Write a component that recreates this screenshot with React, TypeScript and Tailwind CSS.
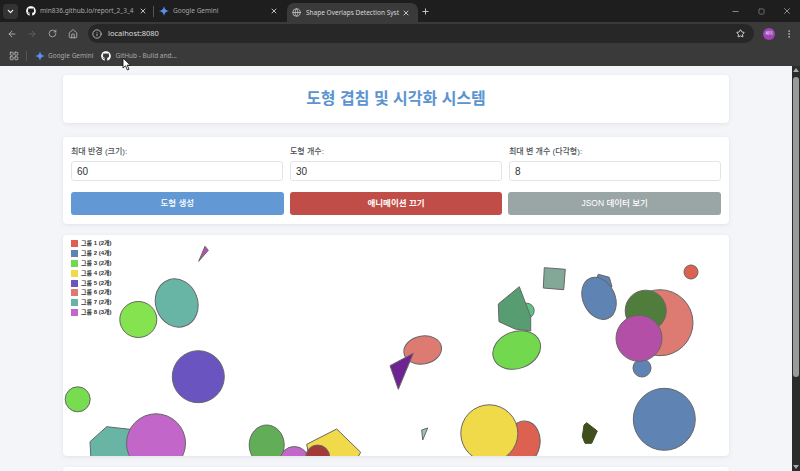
import { ArrowLeft, ArrowRight, EllipsisVertical, Globe, House, Info, LayoutGrid, Minus, Plus, RotateCw, Star, X, ChevronDown, Square } from 'lucide-react';
import { FaGithub } from 'react-icons/fa';

const legend = [
  { label: '그룹 1 (2개)', color: 'bg-[#dd6150]' },
  { label: '그룹 2 (4개)', color: 'bg-[#5f84b3]' },
  { label: '그룹 3 (2개)', color: 'bg-[#72d94f]' },
  { label: '그룹 4 (2개)', color: 'bg-[#f0da4a]' },
  { label: '그룹 5 (2개)', color: 'bg-[#6a55c0]' },
  { label: '그룹 6 (2개)', color: 'bg-[#dd7a72]' },
  { label: '그룹 7 (2개)', color: 'bg-[#68b5a5]' },
  { label: '그룹 8 (3개)', color: 'bg-[#c266c9]' },
];

const Sparkle = ({ size = 10 }: { size?: number }) => (
  <svg width={size} height={size} viewBox="0 0 24 24" className="shrink-0">
    <path d="M12 0C12.8 7 17 11.2 24 12C17 12.8 12.8 17 12 24C11.2 17 7 12.8 0 12C7 11.2 11.2 7 12 0Z" fill="#5b8def" />
  </svg>
);

const Field = ({ label, value }: { label: string; value: string }) => (
  <div className="flex w-[212px] flex-col">
    <label className="h-[24px] text-[8px] leading-[29px] font-medium text-[#4a4f55]">{label}</label>
    <div className="flex h-[20px] items-center rounded-[3px] border border-[#e2e4e8] bg-white pl-[5px] text-[10px] text-[#333]">{value}</div>
  </div>
);

const Shapes = () => (
  <svg viewBox="63 235 666 221" className="h-full w-full" stroke="#666" strokeWidth="1">
    <polygon points="205,246.3 208.3,250.3 198.7,261.3" fill="#b44fb8" />
    <ellipse cx="176.7" cy="303" rx="21" ry="24.5" transform="rotate(-20 176.7 303)" fill="#68b5a5" />
    <ellipse cx="138.3" cy="319.5" rx="18.5" ry="18" fill="#85e34f" />
    <circle cx="198.3" cy="376.7" r="26" fill="#6a55c0" />
    <circle cx="77.7" cy="399.3" r="12.5" fill="#78dc50" />
    <polygon points="91,460 90,441.7 106.7,426.7 130,429.3 150,460" fill="#68b5a5" />
    <circle cx="156" cy="443.3" r="29.5" fill="#c266c9" />
    <ellipse cx="266.7" cy="445" rx="17.5" ry="20" fill="#62ad58" />
    <polygon points="306.7,444.3 336.7,429 360.7,452.3 355,462 310,462" fill="#f0da4a" />
    <circle cx="294.3" cy="461" r="14.5" fill="#c266c9" />
    <circle cx="317.7" cy="457" r="12" fill="#a33a3a" />
    <polygon points="427.7,428 421.7,430 422.7,440" fill="#8fc9b8" />
    <ellipse cx="422.7" cy="350" rx="19" ry="14" transform="rotate(-10 422.7 350)" fill="#dd7a72" />
    <polygon points="413.3,353.3 390,365.7 398.3,389.3" fill="#6f2392" />
    <ellipse cx="523" cy="443" rx="17" ry="22" transform="rotate(10 523 443)" fill="#dd6150" />
    <circle cx="489.3" cy="433.3" r="28.5" fill="#f0da4a" />
    <polygon points="544.3,267.7 565.3,269.3 563.7,289.7 543.3,288" fill="#84a898" />
    <circle cx="526.7" cy="310.7" r="7.5" fill="#5fc284" />
    <polygon points="519.3,286.7 498.3,304 499,321.7 515,329 530.7,331 530.7,316.7" fill="#589c72" />
    <ellipse cx="516.7" cy="350" rx="24.5" ry="18.5" transform="rotate(-20 516.7 350)" fill="#72d94f" />
    <polygon points="598.3,274.3 609.3,277.3 612,286.7 600,290 596.7,278" fill="#5f84b3" />
    <ellipse cx="599" cy="298.3" rx="16" ry="22" transform="rotate(-25 599 298.3)" fill="#5f84b3" />
    <circle cx="691" cy="272" r="7" fill="#dd6150" />
    <circle cx="660" cy="322.7" r="33" fill="#dd7a72" />
    <circle cx="645.7" cy="310.7" r="20.5" fill="#507d3c" />
    <circle cx="642" cy="368" r="9" fill="#5f84b3" />
    <circle cx="639" cy="338.3" r="23" fill="#b44fa8" />
    <circle cx="664.3" cy="419.3" r="31" fill="#5f84b3" />
    <polygon points="586.7,422.7 597.3,431 591.7,443.3 585,443.3 582.3,436.7 584,425" fill="#3f4f1e" stroke="#3f4f1e" />
  </svg>
);

const App = () => (
  <div className="relative flex h-[471px] w-[800px] flex-col overflow-hidden bg-[#f4f5f8] font-['Liberation_Sans','Noto_Sans_CJK_KR',sans-serif]">
    {/* browser chrome */}
    <div className="h-[66px] shrink-0 bg-[#3a3a3a] font-['Noto_Sans','Noto_Sans_CJK_KR',sans-serif] text-[#c4c4c4]">
      <div className="flex h-[22px] items-center bg-[#1e1e1e] text-[6.5px]">
        <div className="ml-[3px] flex h-[15px] w-[15px] items-center justify-center rounded-[4px] bg-[#333]">
          <ChevronDown size={9} strokeWidth={3} className="text-white" />
        </div>
        <div className="ml-[8px] flex w-[127px] items-center">
          <FaGithub size={10} className="shrink-0 text-white" />
          <span className="ml-[4px] w-[93px] whitespace-nowrap text-[#a8a8a8]">min836.github.io/report_2_3_4</span>
          <X size={8} strokeWidth={2.5} className="ml-[6px] text-[#ddd]" />
        </div>
        <div className="h-[11px] w-px bg-[#555]" />
        <div className="ml-[5px] flex w-[129px] items-center">
          <Sparkle />
          <span className="ml-[4px] w-[97px] whitespace-nowrap text-[#a8a8a8]">Google Gemini</span>
          <X size={8} strokeWidth={2.5} className="text-[#ddd]" />
        </div>
        <div className="ml-[-1px] flex h-[19px] w-[131px] items-center self-end rounded-t-[7px] bg-[#3a3a3a] pl-[4px]">
          <Globe size={9} className="ml-[1px] shrink-0 text-[#ccc]" />
          <span className="ml-[5px] w-[96px] whitespace-nowrap text-[#d8d8d8]">Shape Overlaps Detection Syst</span>
          <X size={8} strokeWidth={2.5} className="text-[#ddd]" />
        </div>
        <Plus size={9} strokeWidth={2.5} className="ml-[3px] text-[#ccc]" />
        <div className="flex-1" />
        <Minus size={9} strokeWidth={2} className="text-[#aaa]" />
        <Square size={7} strokeWidth={2} className="ml-[18px] rounded-sm text-[#aaa]" />
        <X size={10} strokeWidth={1.5} className="mr-[8px] ml-[17px] text-[#ccc]" />
      </div>
      <div className="flex h-[23px] items-center">
        <ArrowLeft size={10} strokeWidth={2} className="ml-[7px] text-[#bbb]" />
        <ArrowRight size={10} strokeWidth={2} className="ml-[10px] text-[#666]" />
        <RotateCw size={9} strokeWidth={2} className="ml-[11px] text-[#bbb]" />
        <House size={10} strokeWidth={2} className="ml-[11px] text-[#bbb]" />
        <div className="ml-[10px] flex h-[19px] w-[666px] items-center rounded-full bg-[#272727] pl-[4px]">
          <Info size={10} strokeWidth={2} className="text-[#ccc]" />
          <span className="ml-[6px] text-[7.5px] text-[#ddd]">localhost:8080</span>
          <div className="flex-1" />
          <Star size={9} strokeWidth={2.5} className="mr-[9px] text-[#ddd]" />
        </div>
        <div className="ml-[9px] flex h-[12px] w-[12px] items-center justify-center rounded-full bg-[#a044b8] text-[4px] text-white">세이</div>
        <EllipsisVertical size={10} strokeWidth={2} className="ml-[9px] text-[#bbb]" />
      </div>
      <div className="flex h-[21px] items-center text-[6.5px] text-[#a8a8a8]">
        <LayoutGrid size={10} strokeWidth={2} className="ml-[9px] text-[#bbb]" />
        <div className="ml-[7px] h-[10px] w-px bg-[#555]" />
        <span className="ml-[8px]"><Sparkle /></span>
        <span className="ml-[3px]">Google Gemini</span>
        <FaGithub size={10} className="ml-[8px] text-white" />
        <span className="ml-[4px]">GitHub - Build and...</span>
      </div>
    </div>

    {/* page */}
    <div className="flex min-h-0 flex-1">
      <main className="flex min-w-0 flex-1 flex-col items-center overflow-hidden pt-[9px]">
        <div className="flex h-[48px] w-[666px] shrink-0 items-center justify-center rounded-[4px] bg-white shadow-[0_1px_4px_rgba(0,0,0,0.08)]">
          <h1 className="text-[16px] font-bold text-[#5b94cf]">도형 겹침 및 시각화 시스템</h1>
        </div>
        <div className="mt-[14px] h-[87px] w-[666px] shrink-0 rounded-[4px] bg-white px-[8px] shadow-[0_1px_4px_rgba(0,0,0,0.08)]">
          <div className="flex gap-[7px]">
            <Field label="최대 반경 (크기):" value="60" />
            <Field label="도형 개수:" value="30" />
            <Field label="최대 변 개수 (다각형):" value="8" />
          </div>
          <div className="mt-[11px] flex gap-[6px] text-[8.5px] font-medium text-white">
            <button className="h-[23px] w-[213px] rounded-[3px] bg-[#6298d3]">도형 생성</button>
            <button className="h-[23px] w-[213px] rounded-[3px] bg-[#c14d48] font-bold">애니메이션 끄기</button>
            <button className="h-[23px] w-[213px] rounded-[3px] bg-[#9aa5a5]">JSON 데이터 보기</button>
          </div>
        </div>
        <div className="relative mt-[11px] h-[221px] w-[666px] shrink-0 overflow-hidden rounded-[4px] bg-white shadow-[0_1px_4px_rgba(0,0,0,0.08)]">
          <Shapes />
          <div className="absolute top-[4px] left-[8px] flex flex-col">
            {legend.map((item) => (
              <div key={item.label} className="flex h-[9.8px] items-center">
                <span className={`h-[7px] w-[7px] ${item.color}`} />
                <span className="ml-[3px] text-[6px] font-bold text-[#333]">{item.label}</span>
              </div>
            ))}
          </div>
        </div>
        <div className="mt-[11px] h-[40px] w-[666px] shrink-0 rounded-[4px] bg-white shadow-[0_1px_4px_rgba(0,0,0,0.08)]" />
      </main>
      <div className="flex w-[8px] shrink-0 flex-col items-center bg-[#2c2c2c] pt-[2px]">
        <div className="h-0 w-0 border-x-[3px] border-b-[4px] border-x-transparent border-b-[#aaa]" />
        <div className="mt-[5px] h-[300px] w-[6px] rounded-full bg-[#9a9a9a]" />
        <div className="flex-1" />
        <div className="mb-[2px] h-0 w-0 border-x-[3px] border-t-[4px] border-x-transparent border-t-[#aaa]" />
      </div>
    </div>

    {/* mouse cursor */}
    <svg width="10" height="14" viewBox="0 0 10 14" className="absolute top-[57px] left-[122px]">
      <path d="M1 1V11L3.5 8.8L5.4 13L7 12.2L5.2 8.2H8.5Z" fill="#fff" stroke="#000" strokeWidth="0.8" />
    </svg>
  </div>
);

export default App;
